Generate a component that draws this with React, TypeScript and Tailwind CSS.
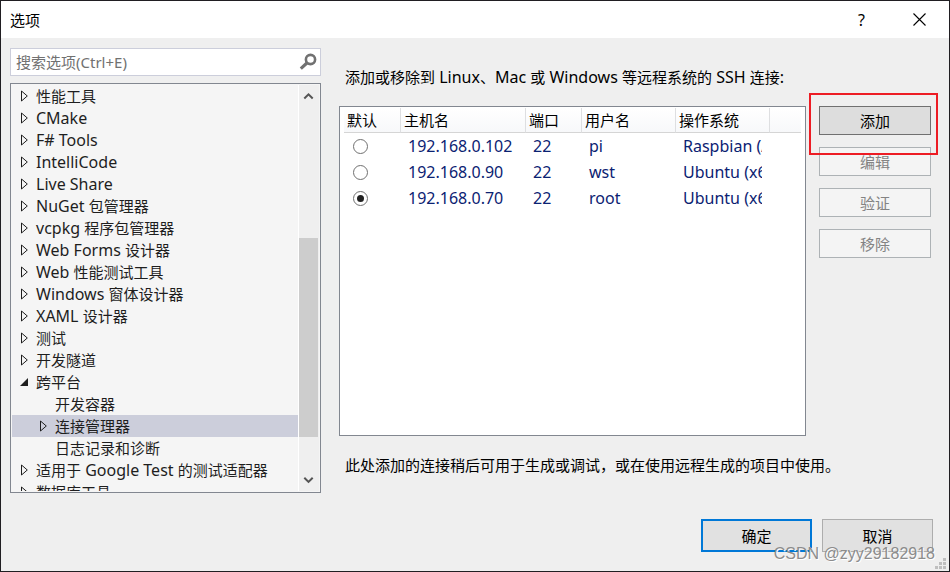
import { useState } from "react";
import clsx from "clsx";

type TreeItem = {
  label: string;
  level?: number;
  state?: "closed" | "open";
};

const TREE_ITEMS: TreeItem[] = [
  { label: "性能工具", state: "closed" },
  { label: "CMake", state: "closed" },
  { label: "F# Tools", state: "closed" },
  { label: "IntelliCode", state: "closed" },
  { label: "Live Share", state: "closed" },
  { label: "NuGet 包管理器", state: "closed" },
  { label: "vcpkg 程序包管理器", state: "closed" },
  { label: "Web Forms 设计器", state: "closed" },
  { label: "Web 性能测试工具", state: "closed" },
  { label: "Windows 窗体设计器", state: "closed" },
  { label: "XAML 设计器", state: "closed" },
  { label: "测试", state: "closed" },
  { label: "开发隧道", state: "closed" },
  { label: "跨平台", state: "open" },
  { label: "开发容器", level: 1 },
  { label: "连接管理器", level: 1, state: "closed" },
  { label: "日志记录和诊断", level: 1 },
  { label: "适用于 Google Test 的测试适配器", state: "closed" },
  { label: "数据库工具", state: "closed" },
];

const CONNECTIONS = [
  { host: "192.168.0.102", port: "22", user: "pi", os: "Raspbian (ARM)" },
  { host: "192.168.0.90", port: "22", user: "wst", os: "Ubuntu (x64)" },
  { host: "192.168.0.70", port: "22", user: "root", os: "Ubuntu (x64)" },
];

const COLUMNS = [
  { label: "默认", width: "w-[57px]" },
  { label: "主机名", width: "w-[125px]" },
  { label: "端口", width: "w-14" },
  { label: "用户名", width: "w-[94px]" },
  { label: "操作系统", width: "w-[94px]" },
];

const SIDE_ACTIONS = ["编辑", "验证", "移除"];

// Latin runs are set one size up from the Chinese around them
function MixedText({ text }: { text: string }) {
  return (
    <span>
      {text.split(/([\x20-\x7e]+)/).map((part, i) =>
        i % 2 === 1 ? (
          <span key={i} className="text-[16px]">
            {part}
          </span>
        ) : (
          part
        )
      )}
    </span>
  );
}

function Expander({ state }: { state?: "closed" | "open" }) {
  return (
    <svg className="h-3 w-2.5 shrink-0" viewBox="0 0 10 12" aria-hidden="true">
      {state === "closed" && (
        <path d="M1.5 1v10l5.8-5z" fill="none" stroke="#1e1e1e" />
      )}
      {state === "open" && <path d="M8 2v8H0z" fill="#1e1e1e" />}
    </svg>
  );
}

function TitleBar() {
  return (
    <header className="flex h-[37px] shrink-0 items-center justify-between bg-white pl-[9px]">
      <h1>选项</h1>
      <div className="flex h-full">
        <button type="button" aria-label="帮助" className="w-[57px] text-[16px]">
          ?
        </button>
        <button
          type="button"
          aria-label="关闭"
          className="flex w-[59px] items-center justify-center"
        >
          <svg className="h-[13px] w-[13px]" viewBox="0 0 13 13">
            <path d="M.5.5l12 12M12.5.5l-12 12" stroke="#000" strokeWidth="1.1" />
          </svg>
        </button>
      </div>
    </header>
  );
}

function SearchBox() {
  return (
    <div className="flex h-7 shrink-0 items-center border border-[#cccedb] bg-white pl-[5px] pr-[3px]">
      <input
        type="text"
        aria-label="搜索选项"
        placeholder="搜索选项(Ctrl+E)"
        className="min-w-0 flex-1 outline-none placeholder:text-[#717171]"
      />
      <svg className="h-[18px] w-[18px]" viewBox="0 0 18 18" fill="none" stroke="#717171">
        <circle cx="11.5" cy="6.5" r="4.6" strokeWidth="2.6" />
        <path d="M8.2 9.8L1.8 15.6" strokeWidth="3.2" />
      </svg>
    </div>
  );
}

function ScrollBar() {
  return (
    <div className="flex w-[21px] shrink-0 flex-col border-l border-white bg-[#efefef] pr-px">
      <button type="button" aria-label="向上滚动" className="flex h-5 items-center justify-center">
        <svg className="h-2.5 w-3" viewBox="0 0 12 10">
          <path d="M1.3 8.5L5.5 4.3L9.7 8.5" fill="none" stroke="#555" strokeWidth="2" />
        </svg>
      </button>
      <div className="flex flex-1 flex-col">
        <div className="flex-[133]" />
        <div className="flex-[199] bg-[#cdcdcd]" />
        <div className="flex-[34]" />
      </div>
      <button type="button" aria-label="向下滚动" className="flex h-5 items-center justify-center">
        <svg className="h-2.5 w-3" viewBox="0 0 12 10">
          <path d="M1.3 1.7L5.5 5.9L9.7 1.7" fill="none" stroke="#555" strokeWidth="2" />
        </svg>
      </button>
    </div>
  );
}

function OptionsTree() {
  const [selected, setSelected] = useState("连接管理器");

  return (
    <div className="flex min-h-0 flex-1 border border-[#828790] bg-[#f5f5f5] p-px">
      <ul role="tree" aria-label="选项" className="min-w-0 flex-1 overflow-hidden">
        {TREE_ITEMS.map((item) => (
          <li
            key={item.label}
            role="treeitem"
            aria-level={(item.level ?? 0) + 1}
            aria-expanded={item.state ? item.state === "open" : undefined}
            aria-selected={item.label === selected}
            onClick={() => setSelected(item.label)}
            className={clsx(
              "flex h-[22px] items-center gap-1.5 whitespace-nowrap text-[#1e1e1e]",
              item.level ? "pl-[27px]" : "pl-2",
              item.label === selected && "bg-[#cccedb]"
            )}
          >
            <Expander state={item.state} />
            <MixedText text={item.label} />
          </li>
        ))}
      </ul>
      <ScrollBar />
    </div>
  );
}

function ConnectionTable() {
  const [defaultHost, setDefaultHost] = useState("192.168.0.70");

  return (
    <div className="min-h-0 min-w-0 flex-1 overflow-hidden border border-[#828790] bg-white py-px pl-1 pr-1">
      <table className="w-full table-fixed border-separate border-spacing-0 text-left">
        <thead className="bg-linear-to-b from-white to-[#f7f8fa]">
          <tr>
            {COLUMNS.map((col) => (
              <th
                key={col.label}
                scope="col"
                className={clsx(
                  "h-[25px] border-b border-r border-b-[#d5d5d5] border-r-[#dedfe1] p-0 pl-[3px] font-normal",
                  col.width
                )}
              >
                {col.label}
              </th>
            ))}
            <td className="border-b border-[#d5d5d5]" />
          </tr>
        </thead>
        <tbody className="text-[16px] text-[#0b2272]">
          {CONNECTIONS.map((c) => (
            <tr key={c.host}>
              <td className="h-[26px] p-0 pl-[9px]">
                <input
                  type="radio"
                  name="default-connection"
                  aria-label={`默认 ${c.host}`}
                  checked={defaultHost === c.host}
                  onChange={() => setDefaultHost(c.host)}
                  className="block h-[15px] w-[15px] appearance-none rounded-full border border-[#707070] bg-white bg-clip-content p-[3px] checked:bg-[#212121]"
                />
              </td>
              <td className="p-0 pl-[7px]">{c.host}</td>
              <td className="p-0 pl-[7px]">{c.port}</td>
              <td className="p-0 pl-[7px]">{c.user}</td>
              <td className="p-0 pl-[7px] pr-2">
                <div className="overflow-hidden whitespace-nowrap">{c.os}</div>
              </td>
              <td />
            </tr>
          ))}
        </tbody>
      </table>
    </div>
  );
}

function SideActions() {
  return (
    <div className="relative flex w-28 shrink-0 flex-col gap-3">
      <button type="button" className="h-[29px] border border-[#707070] bg-[#dddddd]">
        添加
      </button>
      {SIDE_ACTIONS.map((label) => (
        <button
          key={label}
          type="button"
          disabled
          className="h-[29px] border border-[#adb2b5] bg-[#f4f4f4] text-[#838383]"
        >
          {label}
        </button>
      ))}
      {/* Highlight around the add button */}
      <div className="pointer-events-none absolute -left-2.5 -right-[7px] -top-[13px] h-[62px] border-2 border-[#ed1c24]" />
    </div>
  );
}

function ResizeGrip() {
  return (
    <svg className="absolute bottom-0.5 right-[3px] h-[11px] w-[11px]" viewBox="0 0 11 11" fill="#bfbfbf">
      <path d="M8 0h3v3H8zM4 4h3v3H4zM8 4h3v3H8zM0 8h3v3H0zM4 8h3v3H4zM8 8h3v3H8z" />
    </svg>
  );
}

export default function App() {
  return (
    <div className="relative flex h-screen flex-col overflow-hidden border border-[#201e22] bg-[#efefef] font-['Noto_Sans','Noto_Sans_CJK_SC',sans-serif] text-[15px] leading-[22px] text-black">
      <TitleBar />

      <main className="flex min-h-0 flex-1 pl-[9px] pt-2.5">
        <aside className="flex w-[311px] shrink-0 flex-col gap-[7px]">
          <SearchBox />
          <OptionsTree />
        </aside>

        <section className="flex min-w-0 flex-1 flex-col pl-[18px] pr-[18px] pt-[18px]">
          <p className="pl-1.5">
            <MixedText text="添加或移除到 Linux、Mac 或 Windows 等远程系统的 SSH 连接:" />
          </p>
          <div className="flex min-h-0 flex-1 gap-[13px] pt-[18px]">
            <ConnectionTable />
            <SideActions />
          </div>
          <p className="pb-[17px] pl-1.5 pt-[18px]">
            此处添加的连接稍后可用于生成或调试，或在使用远程生成的项目中使用。
          </p>
        </section>
      </main>

      <footer className="flex shrink-0 justify-end gap-2.5 pb-[19px] pr-4 pt-[26px]">
        <button type="button" className="h-[33px] w-[111px] border-2 border-[#0078d7] bg-[#e1e1e1]">
          确定
        </button>
        <button type="button" className="h-[33px] w-[111px] border border-[#adadad] bg-[#e1e1e1]">
          取消
        </button>
      </footer>

      <span className="pointer-events-none absolute bottom-1.5 right-3.5 font-['Liberation_Sans',sans-serif] text-[16px] text-[#8c8c8c] text-shadow-[1px_1px_0_#ffffff]">
        CSDN @zyy29182918
      </span>
      <ResizeGrip />
    </div>
  );
}
